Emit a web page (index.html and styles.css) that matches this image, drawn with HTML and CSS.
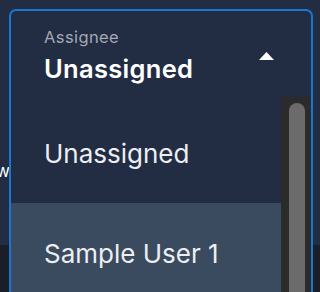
FILE: index.html
```html
<!DOCTYPE html>
<html>
<head>
<meta charset="utf-8">
<link rel="stylesheet" href="styles.css">
</head>
<body>
<div class="page">
  <div class="page-top">
    <div class="peek"><span class="peek-text">New</span></div>
  </div>
  <div class="page-bottom"></div>
</div>

<div class="dropdown">
  <div class="field">
    <div class="field-text">
      <div class="field-label">Assignee</div>
      <div class="field-value">Unassigned</div>
    </div>
    <svg class="arrow" width="15" height="8" viewBox="0 0 15 8"><polygon points="7.5,0 15,8 0,8" fill="#ffffff"/></svg>
  </div>
  <div class="menu">
    <ul class="options">
      <li class="option">Unassigned</li>
      <li class="option option-hover">Sample User 1</li>
    </ul>
    <div class="scrollbar"><div class="thumb"></div></div>
  </div>
</div>
</body>
</html>
```
FILE: styles.css
```css
html, body {
  margin: 0;
  padding: 0;
}
body {
  width: 320px;
  height: 292px;
  overflow: hidden;
  position: relative;
  background: #222c42;
  font-family: Inter, "Noto Sans", sans-serif;
}
.page {
  display: flex;
  flex-direction: column;
  height: 292px;
}
.page-top {
  height: 245px;
  flex-shrink: 0;
  background: #222c42;
  padding-top: 161px;
  box-sizing: border-box;
}
.peek {
  width: 10px;
  display: flex;
  justify-content: flex-end;
  white-space: nowrap;
  font-size: 17px;
  line-height: 20px;
  color: #ffffff;
}
.page-bottom {
  flex: 1;
  background: #1a1e28;
}
.dropdown {
  position: absolute;
  left: 9px;
  top: 9px;
  width: 304px;
  height: 283px;
  overflow: hidden;
  box-sizing: border-box;
  border: 2px solid #1976d2;
  border-bottom: none;
  border-radius: 7px 7px 0 0;
  background: #222c42;
  display: flex;
  flex-direction: column;
}
.field {
  height: 86px;
  flex-shrink: 0;
  box-sizing: border-box;
  padding: 16px 37px 0 33px;
  display: flex;
  justify-content: space-between;
  align-items: flex-start;
}
.field-label {
  font-size: 16.5px;
  line-height: 20px;
  color: #a3a9b5;
  letter-spacing: 0.4px;
}
.field-value {
  margin-top: 7px;
  font-size: 25.5px;
  line-height: 30px;
  font-weight: 600;
  color: #ffffff;
  letter-spacing: 0.3px;
}
.arrow {
  margin-top: 25px;
}
.menu {
  flex: 1;
  min-height: 0;
  display: flex;
}
.options {
  list-style: none;
  margin: 0;
  padding: 6px 0 0 0;
  flex: 1;
}
.option {
  height: 100px;
  display: flex;
  align-items: center;
  padding-left: 33px;
  font-size: 26px;
  color: #eceef2;
}
.option-hover {
  background: #3a4a5f;
}
.scrollbar {
  width: 30px;
  flex-shrink: 0;
  background: #2b2b2b;
  padding: 6px 6px 0 8px;
  box-sizing: border-box;
}
.thumb {
  height: 300px;
  background: #6b6b6b;
  border-radius: 8px 8px 0 0;
}
```
